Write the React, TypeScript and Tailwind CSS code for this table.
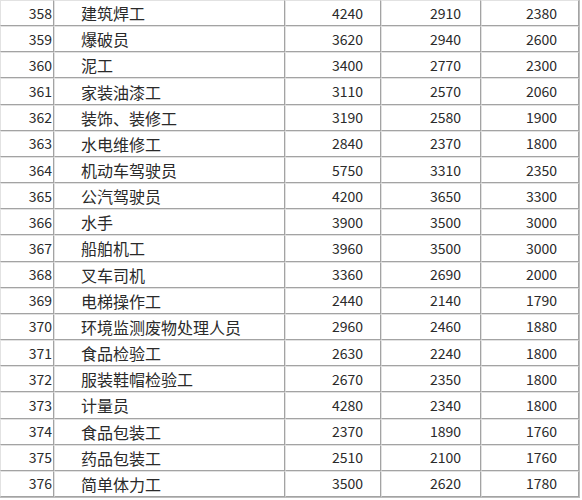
const rows: [number, string, number, number, number][] = [
  [358, "建筑焊工", 4240, 2910, 2380],
  [359, "爆破员", 3620, 2940, 2600],
  [360, "泥工", 3400, 2770, 2300],
  [361, "家装油漆工", 3110, 2570, 2060],
  [362, "装饰、装修工", 3190, 2580, 1900],
  [363, "水电维修工", 2840, 2370, 1800],
  [364, "机动车驾驶员", 5750, 3310, 2350],
  [365, "公汽驾驶员", 4200, 3650, 3300],
  [366, "水手", 3900, 3500, 3000],
  [367, "船舶机工", 3960, 3500, 3000],
  [368, "叉车司机", 3360, 2690, 2000],
  [369, "电梯操作工", 2440, 2140, 1790],
  [370, "环境监测废物处理人员", 2960, 2460, 1880],
  [371, "食品检验工", 2630, 2240, 1800],
  [372, "服装鞋帽检验工", 2670, 2350, 1800],
  [373, "计量员", 4280, 2340, 1800],
  [374, "食品包装工", 2370, 1890, 1760],
  [375, "药品包装工", 2510, 2100, 1760],
  [376, "简单体力工", 3500, 2620, 1780],
];

const cell =
  "flex items-center border-t border-l border-t-[#e2e2e2] border-l-[#e2e2e2] border-r border-b border-r-[#a3a3a3] border-b-[#a3a3a3]";

export default function App() {
  return (
    <div className="w-[582px] h-[500px] bg-white overflow-hidden">
      <div
        className="w-[580px] h-[498px] flex flex-col border-r border-b border-[#bdbdbd] text-[#2a2a2a]"
        style={{ fontFamily: '"Noto Sans CJK SC", "DejaVu Sans", sans-serif' }}
      >
        {rows.map(([no, name, a, b, c]) => (
          <div key={no} className="flex flex-1 min-h-0">
            <div className={`${cell} w-[54px] justify-end pr-[1px] text-[14px]`}>{no}</div>
            <div className={`${cell} w-[231px] pl-[26px] text-[16px] leading-none`}>{name}</div>
            <div className={`${cell} w-[96px] justify-end pr-[17px] text-[14px]`}>{a}</div>
            <div className={`${cell} w-[100px] justify-end pr-[19px] text-[14px]`}>{b}</div>
            <div className={`${cell} flex-1 justify-end pr-[21px] text-[14px]`}>{c}</div>
          </div>
        ))}
      </div>
    </div>
  );
}
